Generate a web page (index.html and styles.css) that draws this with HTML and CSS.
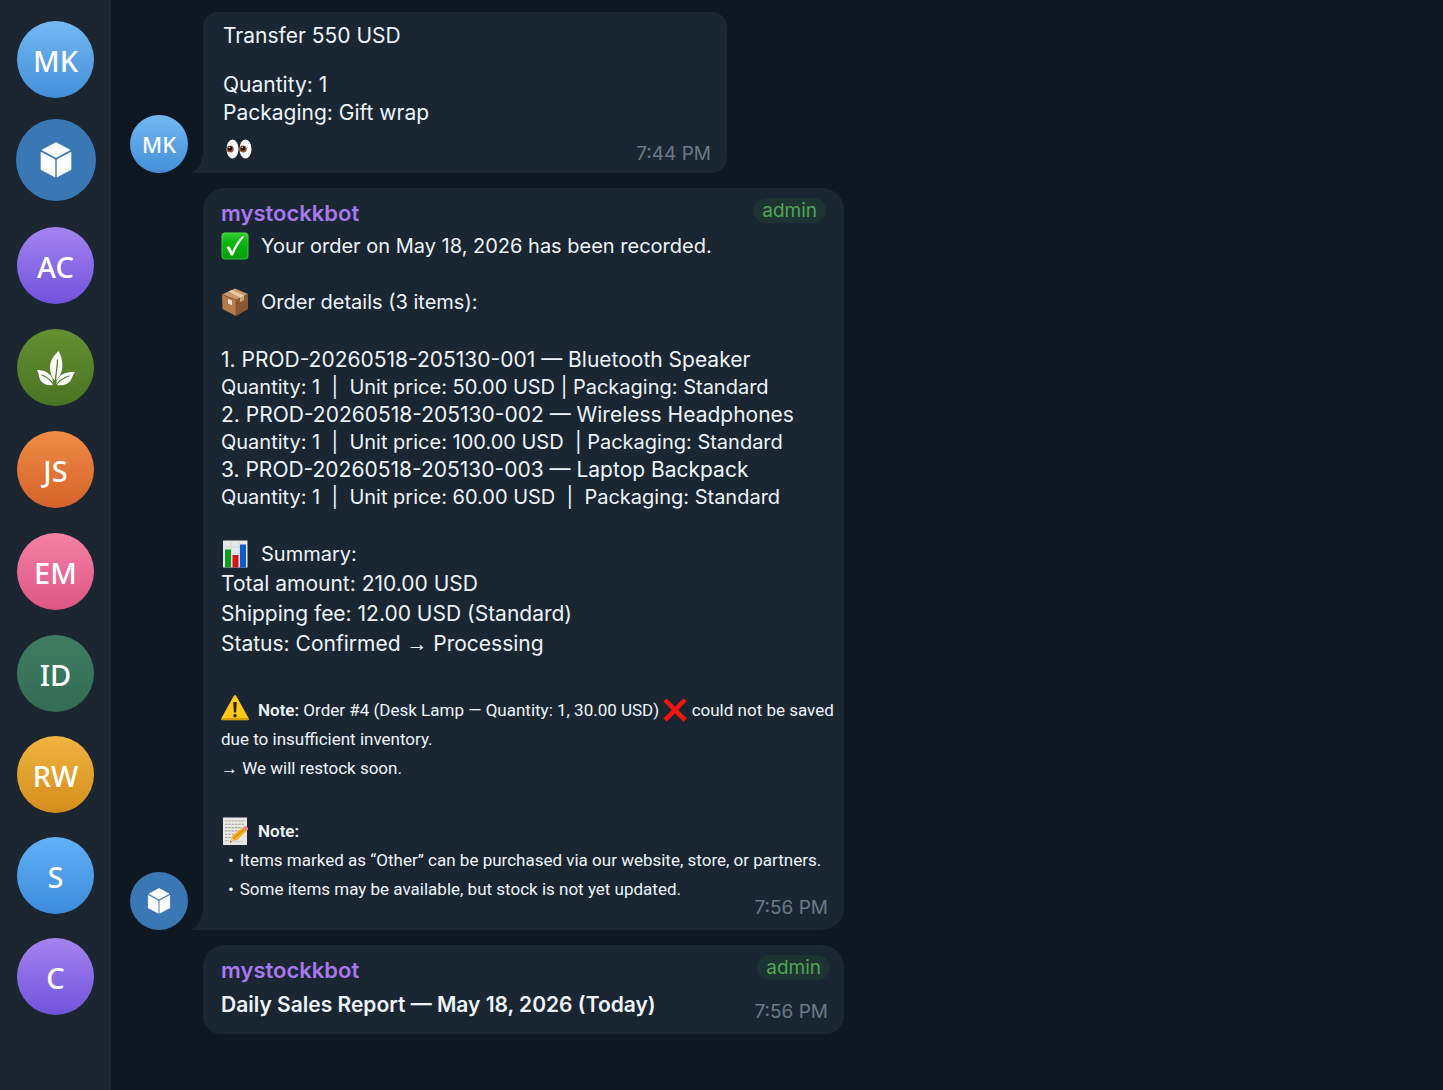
FILE: index.html
```html
<!DOCTYPE html>
<html lang="en">

<head>
    <meta charset="UTF-8">
    <meta name="viewport" content="width=device-width, initial-scale=1.0">
    <title>mystockkbot</title>
    <link rel="stylesheet" href="styles.css">
</head>

<body>
    <!-- shared icons -->
    <svg class="sprite" aria-hidden="true">
        <symbol id="box" viewBox="0 0 32 36">
            <path fill="#fff" d="M16 0.5 30 8 16 15.5 2 8Z M1 10.2 15 17.6V35L1 27.6Z M31 10.2 17 17.6V35L31 27.6Z" stroke="#fff" stroke-width=".6" stroke-linejoin="round" />
        </symbol>
    </svg>

    <div class="app">
        <nav class="sidebar">
            <a href="#" class="avatar blue">MK</a>
            <a href="#" class="avatar bot active" aria-label="mystockkbot"><svg class="box-icon"><use href="#box" /></svg></a>
            <a href="#" class="avatar purple">AC</a>
            <a href="#" class="avatar green" aria-label="Leaf">
                <svg class="leaf-icon" viewBox="0 0 40 38">
                    <g fill="#fff">
                        <path d="M22.500 1C17 6 13.500 12 14 19c.3 5 2.500 9 5 12 4-3 7-8 7.300-14C26.500 11 25 5 22.500 1Z" />
                        <path d="M1 20c6 0 11 2 14 6 2 3 2.500 6 2 9-7 1-12-2-13.500-7C2.800 25 2.500 22.500 1 20Z" />
                        <path d="M39 22c-7-.5-12 1-15.500 4.500C21 29 20 32 20.500 35c6 1 12-.5 14.500-5 1.500-3 2-5.500 4-8Z" />
                    </g>
                    <g fill="none" stroke="#55802a" stroke-width="1.300" stroke-linecap="round">
                        <path d="M21.500 10c0 8-2 13-2.500 27" />
                        <path d="M6 25c5 2 9 5 11.500 10" />
                        <path d="M33 26c-6 2-10 4.500-13 9.500" />
                    </g>
                </svg>
            </a>
            <a href="#" class="avatar orange">JS</a>
            <a href="#" class="avatar pink">EM</a>
            <a href="#" class="avatar teal">ID</a>
            <a href="#" class="avatar yellow">RW</a>
            <a href="#" class="avatar sky">S</a>
            <a href="#" class="avatar purple">C</a>
        </nav>

        <main class="chat">
            <div class="message">
                <div class="avatar small blue">MK</div>
                <div class="bubble transfer tail">
                    <p>Transfer 550 USD</p>
                    <p class="packing">Quantity: 1<br>Packaging: Gift wrap</p>
                    <svg class="eyes" viewBox="0 0 26 20" role="img" aria-label="Eyes">
                        <g fill="#fff">
                            <ellipse cx="6.500" cy="10" rx="6" ry="9.500" />
                            <ellipse cx="19.500" cy="10" rx="6" ry="9.500" />
                        </g>
                        <circle cx="4.200" cy="10" r="3.600" fill="#9c5425" />
                        <circle cx="17.200" cy="10" r="3.600" fill="#9c5425" />
                        <circle cx="4" cy="9.500" r="2.300" fill="#160d0a" />
                        <circle cx="17" cy="9.500" r="2.300" fill="#160d0a" />
                        <circle cx="3.200" cy="8.500" r=".7" fill="#fff" />
                        <circle cx="16.200" cy="8.500" r=".7" fill="#fff" />
                    </svg>
                    <time class="time">7:44 PM</time>
                </div>
            </div>

            <div class="message">
                <div class="avatar small bot"><svg class="box-icon"><use href="#box" /></svg></div>
                <div class="bubble tail">
                    <div class="head">
                        <span class="name">mystockkbot</span>
                        <span class="badge">admin</span>
                    </div>
                    <p class="title">
                        <svg class="emoji" viewBox="0 0 28 28" role="img" aria-label="Done">
                            <defs>
                                <linearGradient id="check-bg" x2="0" y2="1">
                                    <stop stop-color="#35cf35" />
                                    <stop offset=".4" stop-color="#06b50d" />
                                    <stop offset="1" stop-color="#079b0d" />
                                </linearGradient>
                            </defs>
                            <rect x=".5" y=".5" width="27" height="27" rx="3.500" fill="url(#check-bg)" />
                            <rect x="1.200" y="1.200" width="25.600" height="25.600" rx="3" fill="none" stroke="#54d957" stroke-opacity=".6" />
                            <path d="M5.300 15.500 8 14c1.500 2 2.400 3.900 3.100 5.800C13.700 13.500 17 8.500 21.500 4.300l1.700.4C18.300 10.500 14.600 16.500 12 23.500h-2.300C8.700 20.500 7.300 17.800 5.300 15.500Z" fill="#fff" />
                        </svg>
                        Your order on May 18, 2026 has been recorded.
                    </p>
                    <p class="title details">
                        <svg class="emoji" viewBox="0 0 28 28" role="img" aria-label="Package">
                            <path d="M14 .5 27 6 15 12 1 6.500Z" fill="#c99769" />
                            <path d="M1 6.500 15 12v16L1.500 21Z" fill="#b57a4c" />
                            <path d="M27 6 15 12v16l12-7Z" fill="#8d5732" />
                            <path d="m7.500 3.500 3.500-1.500L23 7.500v4.300l-4 2V9.500Z" fill="#e6cba9" />
                            <path d="m19 9.700 4-2v4.200l-4 2Z" fill="#c7a27b" />
                            <path d="m7 11 4 1.500v4.700l-4-1.600Z" fill="#e7dfd5" />
                            <path d="M1 6.500 15 12v16" fill="none" stroke="#724324" stroke-width=".5" />
                        </svg>
                        Order details (3 items):
                    </p>

                    <div class="items">
                        <p class="product">1. PROD-20260518-205130-001 — Bluetooth Speaker</p>
                        <p class="spec">Quantity: 1 &nbsp;|&nbsp; Unit price: 50.00 USD | Packaging: Standard</p>
                        <p class="product">2. PROD-20260518-205130-002 — Wireless Headphones</p>
                        <p class="spec">Quantity: 1 &nbsp;|&nbsp; Unit price: 100.00 USD &nbsp;| Packaging: Standard</p>
                        <p class="product">3. PROD-20260518-205130-003 — Laptop Backpack</p>
                        <p class="spec">Quantity: 1 &nbsp;|&nbsp; Unit price: 60.00 USD &nbsp;|&nbsp; Packaging: Standard</p>
                    </div>

                    <div class="summary">
                        <p class="title">
                            <svg class="emoji" viewBox="0 0 28 28" role="img" aria-label="Chart">
                                <rect x="2" y=".5" width="24.500" height="27" fill="#e6e9ea" />
                                <path d="M2 7h24.500M2 13.500h24.500M2 20h24.500M10 .5v27M18 .5v27" stroke="#c5cacd" stroke-width=".5" />
                                <rect x="4" y="9.500" width="6" height="18" fill="#0a9c1e" />
                                <rect x="11.500" y="15" width="6" height="12.500" fill="#d3161d" />
                                <rect x="19" y="4.500" width="6" height="23" fill="#1559c7" />
                            </svg>
                            Summary:
                        </p>
                        <p>Total amount: 210.00 USD</p>
                        <p>Shipping fee: 12.00 USD (Standard)</p>
                        <p>Status: Confirmed <span class="arrow">→</span> Processing</p>
                    </div>

                    <div class="note">
                        <p>
                            <svg class="emoji warn" viewBox="0 0 28 28" role="img" aria-label="Warning">
                                <path d="M14 2.500 26.500 25H1.500Z" fill="#fcc81c" stroke="#fcc81c" stroke-width="2.600" stroke-linejoin="round" />
                                <path d="M1.500 25h25" stroke="#d99b08" stroke-width="2" stroke-linecap="round" />
                                <path d="M12.300 8h3.400l-.6 10.500h-2.200Z" fill="#29210c" />
                                <circle cx="14" cy="21.800" r="1.700" fill="#29210c" />
                            </svg><b>Note:</b> Order #4 (Desk Lamp — Quantity: 1, 30.00 USD)
                            <svg class="cross" viewBox="0 0 24 24" role="img" aria-label="Failed">
                                <path d="M3.500.5C6.500 3 9 5.800 12 8.800 15 5.500 17.800 2.700 21 .5l2.500 3C20.500 6 18 9 15.300 12c2.700 2.800 5.500 5.700 8.500 8.300L20.500 23.700C17.500 21 14.800 18.300 12 15.300 9.300 18 6.500 21 3.500 23.500L.3 20.300c3-2.500 5.800-5.300 8.400-8.300C6 9 3.300 6.200.3 3.600Z" fill="#f2150b" />
                            </svg>
                            could not be saved<br>due to insufficient inventory.
                        </p>
                        <p><span class="arrow">→</span> We will restock soon.</p>
                    </div>

                    <div class="note extra">
                        <p class="title">
                            <svg class="emoji" viewBox="0 0 28 28" role="img" aria-label="Memo">
                                <rect x="2" y=".5" width="24" height="27.500" fill="#e9e8e4" />
                                <path d="M4 4h20M4 7.300h20M4 10.600h17M4 13.900h14M4 17.200h11M4 20.500h7M4 23.800h4" stroke="#a6a6a3" stroke-width="1.100" stroke-dasharray="2.500 .8" />
                                <path d="M22 24.500H14" stroke="#c8c7c3" />
                                <path d="m9 25.500 2.500-7L22.500 10l3.300 3.800L16 23Z" fill="#f3b022" />
                                <path d="m12.500 21.500 11-9.500" stroke="#d18a12" stroke-width="1.200" />
                                <path d="m9 25.500 1.800-5 3.700 3.500Z" fill="#e6c79e" />
                                <path d="m9 25.500.6-1.800 1.200 1.200Z" fill="#333" />
                                <path d="m21.700 10.600 2-1.600c1.800-.5 4 2 3.300 3.800l-1.700 1.500Z" fill="#ef8696" />
                            </svg>
                            <b>Note:</b>
                        </p>
                        <ul>
                            <li>Items marked as “Other” can be purchased via our website, store, or partners.</li>
                            <li>Some items may be available, but stock is not yet updated.</li>
                        </ul>
                    </div>
                    <time class="time">7:56 PM</time>
                </div>
            </div>

            <div class="message">
                <div class="bubble report">
                    <div class="head">
                        <span class="name">mystockkbot</span>
                        <span class="badge">admin</span>
                    </div>
                    <p class="headline">Daily Sales Report — May 18, 2026 (Today)</p>
                    <time class="time">7:56 PM</time>
                </div>
            </div>
        </main>
    </div>
</body>

</html>
```
FILE: styles.css
```css
* {
    box-sizing: border-box;
}

body {
    margin: 0;
    background-color: #0e1822;
    color: #eef4fa;
    font-family: Inter, "Liberation Sans", sans-serif;
    font-size: 21px;
    line-height: 27px;
}

p, ul {
    margin: 0;
    padding: 0;
}

.sprite {
    position: absolute;
    width: 0;
    height: 0;
}

.app {
    display: flex;
    min-height: 100vh;
}

/* sidebar */
.sidebar {
    flex: none;
    display: flex;
    flex-direction: column;
    align-items: center;
    gap: 25px;
    width: 111px;
    padding-top: 21px;
    background-color: #1b2631;
}

.avatar {
    display: flex;
    flex: none;
    justify-content: center;
    align-items: center;
    width: 77px;
    height: 77px;
    padding-top: 2px;
    border-radius: 50%;
    color: white;
    font-family: "Noto Sans", sans-serif;
    font-size: 29px;
    font-weight: 500;
    text-decoration: none;
}

.avatar:nth-child(n+8) {
    margin-top: -1px;
}

.avatar.active {
    width: 80px;
    height: 82px;
    margin: -4px 0 1px;
    padding: 0;
}

.avatar.small {
    width: 58px;
    height: 58px;
    padding-top: 1px;
    font-size: 22px;
}

.avatar.small.bot {
    padding: 0;
}

.blue { background: linear-gradient(#72b8f3, #448fd8); }
.bot { background: #3a78b5; }
.purple { background: linear-gradient(#a583ef, #7053dc); }
.green { background: linear-gradient(#648f32, #4a7422); }
.orange { background: linear-gradient(#f08c45, #d4622a); }
.pink { background: linear-gradient(#f580a5, #dc5684); }
.teal { background: linear-gradient(#3f7d63, #336c55); }
.yellow { background: linear-gradient(#f0b440, #d48d1c); }
.sky { background: linear-gradient(#62b0f5, #3d8cdb); }

.box-icon {
    width: 32px;
    height: 36px;
}

.small .box-icon {
    width: 24px;
    height: 26px;
}

.leaf-icon {
    width: 40px;
    height: 38px;
}

/* messages */
.chat {
    flex: 1;
    display: flex;
    flex-direction: column;
    gap: 15px;
    min-width: 0;
    padding: 12px 19px;
}

.message {
    display: grid;
    grid-template-columns: 58px minmax(0, 641px);
    column-gap: 15px;
    align-items: end;
}

.bubble {
    position: relative;
    grid-column: 2;
    padding: 10px 8px 26px 18px;
    border-radius: 22px;
    background-color: #1a2733;
}

.bubble.tail {
    border-bottom-left-radius: 0;
}

.bubble.tail::before {
    content: "";
    position: absolute;
    right: 100%;
    bottom: 0;
    width: 14px;
    height: 22px;
    background: radial-gradient(ellipse 14px 22px at 0 0, transparent 97%, #1a2733);
}

.transfer {
    width: 524px;
    max-width: 100%;
    padding: 10px 18px 14px 20px;
    border-radius: 15px;
}

.packing {
    margin-top: 22px;
    line-height: 28px;
}

.eyes {
    display: block;
    width: 26px;
    height: 20px;
    margin: 12px 0 0 3px;
}

.head {
    display: flex;
    justify-content: space-between;
    align-items: center;
    height: 30px;
    padding-right: 10px;
}

.name {
    color: #a878f0;
    font-size: 22px;
    font-weight: 600;
}

.badge {
    align-self: flex-start;
    padding: 0 9px;
    border-radius: 13px;
    background-color: #1d3433;
    color: #4fa653;
    font-size: 19px;
    line-height: 25px;
}

.title {
    display: flex;
    align-items: center;
    gap: 12px;
    font-size: 20px;
    line-height: 36px;
}

.details {
    margin-top: 20px;
}

.emoji {
    flex: none;
    width: 28px;
    height: 28px;
}

.items {
    margin-top: 26px;
}

.spec {
    font-size: 20px;
    line-height: 28px;
}

.summary {
    margin-top: 28px;
    line-height: 30px;
}

.summary .title,
.note .title {
    line-height: 30px;
}

.arrow {
    font-family: "Liberation Sans", sans-serif;
    line-height: 1;
}

.note {
    margin-top: 37px;
    font-family: Roboto, sans-serif;
    font-size: 17px;
    line-height: 29px;
}

.note b {
    font-weight: 600;
}

.note .title {
    gap: 9px;
    font-size: 17px;
}

.warn,
.cross {
    margin: -4px 9px 0 0;
    vertical-align: -6px;
}

.cross {
    width: 24px;
    height: 24px;
    margin-right: 0;
}

.extra {
    margin-top: 33px;
}

.note ul {
    padding-left: 7px;
    list-style: none;
}

.note li::before {
    content: "•";
    margin-right: 6px;
}

.time {
    position: absolute;
    right: 16px;
    bottom: 10px;
    color: #6c7985;
    font-size: 19px;
    line-height: 24px;
}

.transfer .time {
    bottom: 7px;
}

/* daily report */
.report {
    padding-bottom: 10px;
    border-radius: 22px 22px 18px 18px;
}

.report .badge {
    margin-right: -4px;
}

.headline {
    font-weight: 600;
    line-height: 39px;
}
```
